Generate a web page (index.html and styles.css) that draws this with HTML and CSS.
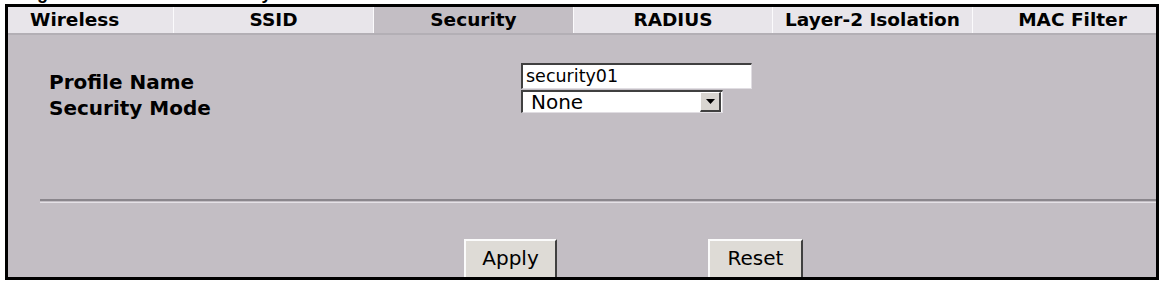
FILE: index.html
```html
<!DOCTYPE html>
<html>
<head>
<meta charset="utf-8">
<link rel="stylesheet" href="styles.css">
</head>
<body>
<div class="caption"><span class="caption-text">Figure 64 Wireless &gt; Security</span></div>
<div class="frame">
  <div class="tabs">
    <div class="tab tab-first">Wireless</div>
    <div class="tab">SSID</div>
    <div class="tab tab-active">Security</div>
    <div class="tab">RADIUS</div>
    <div class="tab">Layer-2 Isolation</div>
    <div class="tab tab-last">MAC Filter</div>
  </div>
  <div class="content">
    <div class="form">
      <div class="row row-1">
        <div class="label label-1">Profile Name</div>
        <div class="input">security01</div>
      </div>
      <div class="row row-2">
        <div class="label label-2">Security Mode</div>
        <div class="select">
          <span class="select-value">None</span>
          <span class="select-arrow"><svg width="9" height="5" viewBox="0 0 9 5"><path d="M0 0H9L4.5 5Z" fill="#000"/></svg></span>
        </div>
      </div>
    </div>
    <div class="rule"></div>
    <div class="buttons">
      <div class="btn btn-apply">Apply</div>
      <div class="btn btn-reset">Reset</div>
    </div>
  </div>
</div>
</body>
</html>
```
FILE: styles.css
```css
html, body {
  margin: 0;
  padding: 0;
  background: #ffffff;
}
body {
  width: 1159px;
  height: 284px;
  overflow: hidden;
  font-family: "DejaVu Sans", "Liberation Sans", sans-serif;
  color: #000;
}
.caption {
  height: 4px;
  overflow: hidden;
  font: bold 18px/18px "Liberation Sans", Arial, sans-serif;
  padding-left: 21px;
}
.caption-text {
  display: block;
  margin-top: -16px;
  white-space: nowrap;
}
.frame {
  margin-left: 5px;
  width: 1148px;
  height: 270px;
  border: 3px solid #000;
  overflow: hidden;
  background: #c3bec4;
  display: flex;
  flex-direction: column;
}
.tabs {
  display: grid;
  grid-template-columns: 165px 200px 200px 199px 200px 1fr;
  height: 26px;
  border-bottom: 2px solid #b3afb5;
}
.tab {
  background: #e8e5ea;
  font-weight: bold;
  font-size: 18.5px;
  line-height: 26px;
  text-align: center;
  border-left: 1px solid #fbfafc;
  white-space: nowrap;
}
.tab-first {
  border-left: none;
  text-align: left;
  padding-left: 22px;
}
.tab-active {
  background: #c3bec4;
}
.tab-last {
  padding-left: 16px;
}
.content {
  flex: 1;
  display: flex;
  flex-direction: column;
}
.form {
  padding-top: 28px;
  padding-left: 41px;
  display: flex;
  flex-direction: column;
  gap: 1px;
}
.row {
  display: flex;
  align-items: flex-start;
}
.row-1 { height: 26px; }
.row-2 { height: 23px; }
.label {
  width: 472px;
  flex: none;
  font-weight: bold;
  font-size: 20px;
  line-height: 22px;
}
.label-1 { padding-top: 8px; }
.label-2 { padding-top: 7px; }
.input {
  box-sizing: border-box;
  width: 231px;
  height: 26px;
  background: #fff;
  border-top: 2px solid #404040;
  border-left: 2px solid #404040;
  border-right: 1px solid #e0dde2;
  border-bottom: 1px solid #e0dde2;
  font-size: 17.5px;
  line-height: 23px;
  padding-left: 3px;
}
.select {
  box-sizing: border-box;
  width: 202px;
  height: 23px;
  background: #fff;
  border-top: 2px solid #404040;
  border-left: 2px solid #404040;
  border-right: 1px solid #e0dde2;
  border-bottom: 1px solid #e0dde2;
  display: flex;
  justify-content: space-between;
}
.select-value {
  font-size: 20px;
  line-height: 20px;
  padding-left: 8px;
}
.select-arrow {
  box-sizing: border-box;
  width: 21px;
  height: 20px;
  margin-right: 1px;
  background: #d8d5d0;
  border-top: 1px solid #fff;
  border-left: 1px solid #fff;
  border-right: 2px solid #404040;
  border-bottom: 2px solid #404040;
  display: flex;
  align-items: center;
  justify-content: center;
}
.rule {
  margin-top: 86px;
  margin-left: 32px;
  height: 1px;
  border-top: 2px solid #8a868c;
  border-bottom: 1px solid #e4e1e6;
}
.buttons {
  margin-top: 36px;
  padding-left: 456px;
  display: flex;
  gap: 151px;
}
.btn {
  box-sizing: border-box;
  height: 40px;
  background: #dedbd6;
  border-top: 2px solid #fbfbfb;
  border-left: 2px solid #fbfbfb;
  border-right: 2px solid #404040;
  border-bottom: 2px solid #404040;
  font-size: 20px;
  line-height: 34px;
  text-align: center;
}
.btn-apply { width: 93px; }
.btn-reset { width: 95px; }
```
